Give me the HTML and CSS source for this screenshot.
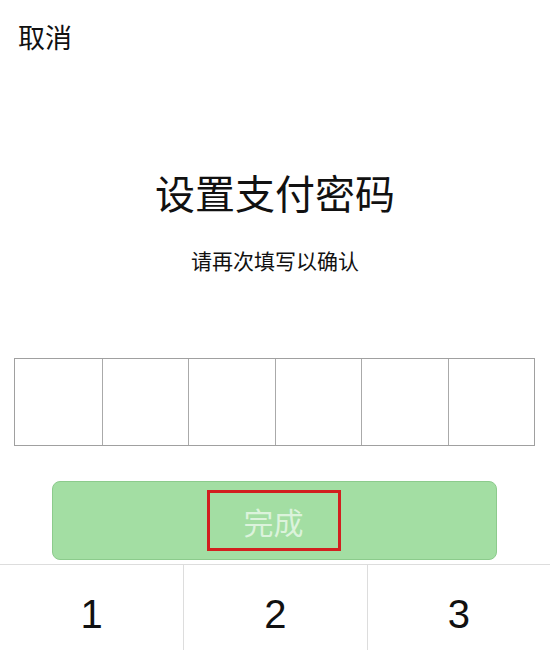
FILE: index.html
```html
<!DOCTYPE html>
<html lang="zh-CN">
<head>
<meta charset="utf-8">
<title>设置支付密码</title>
<link rel="stylesheet" href="styles.css">
</head>
<body>
<div class="page">
  <header class="top">
    <span class="cancel">取消</span>
  </header>
  <h1 class="title">设置支付密码</h1>
  <p class="subtitle">请再次填写以确认</p>
  <div class="pwd">
    <div class="cell"></div>
    <div class="cell"></div>
    <div class="cell"></div>
    <div class="cell"></div>
    <div class="cell"></div>
    <div class="cell"></div>
  </div>
  <div class="btn">
    <span class="mark">完成</span>
  </div>
  <div class="keypad">
    <div class="key">1</div>
    <div class="key">2</div>
    <div class="key">3</div>
  </div>
</div>
</body>
</html>
```
FILE: styles.css
```css
html, body {
  margin: 0;
  padding: 0;
  background: #fff;
}
body {
  font-family: "Noto Sans CJK SC", "Noto Sans", sans-serif;
  color: #111;
  width: 550px;
  height: 650px;
  overflow: hidden;
}
.page {
  display: flex;
  flex-direction: column;
}
.top {
  padding: 22px 0 0 18px;
  height: 32px;
}
.cancel {
  font-size: 27px;
  line-height: 30px;
}
.title {
  margin: 116px 0 0;
  font-size: 40px;
  line-height: 44px;
  font-weight: normal;
  text-align: center;
  color: #111;
}
.subtitle {
  margin: 33px 0 0;
  font-size: 21px;
  line-height: 26px;
  text-align: center;
}
.pwd {
  margin: 85px 15px 0 14px;
  display: grid;
  grid-template-columns: repeat(6, 1fr);
  height: 88px;
  border: 1px solid #a0a0a0;
  box-sizing: border-box;
}
.cell {
  border-left: 1px solid #aaa;
}
.cell:first-child {
  border-left: none;
}
.btn {
  margin: 35px 53px 0 52px;
  height: 79px;
  box-sizing: border-box;
  background: #a3dea3;
  border: 1px solid #8ccb8c;
  border-radius: 8px;
  display: flex;
  align-items: center;
  justify-content: center;
}
.mark {
  width: 134px;
  height: 61px;
  box-sizing: border-box;
  border: 3px solid #d21f1f;
  margin-left: -2px;
  display: flex;
  align-items: center;
  justify-content: center;
  font-size: 30px;
  color: #dcf3dc;
}
.keypad {
  margin-top: 4px;
  border-top: 1px solid #ddd;
  display: grid;
  grid-template-columns: repeat(3, 1fr);
}
.key {
  height: 98px;
  display: flex;
  align-items: center;
  justify-content: center;
  font-family: "Liberation Sans", "Noto Sans", sans-serif;
  font-size: 40px;
  color: #111;
  border-left: 1px solid #ddd;
}
.key:first-child {
  border-left: none;
}
```
